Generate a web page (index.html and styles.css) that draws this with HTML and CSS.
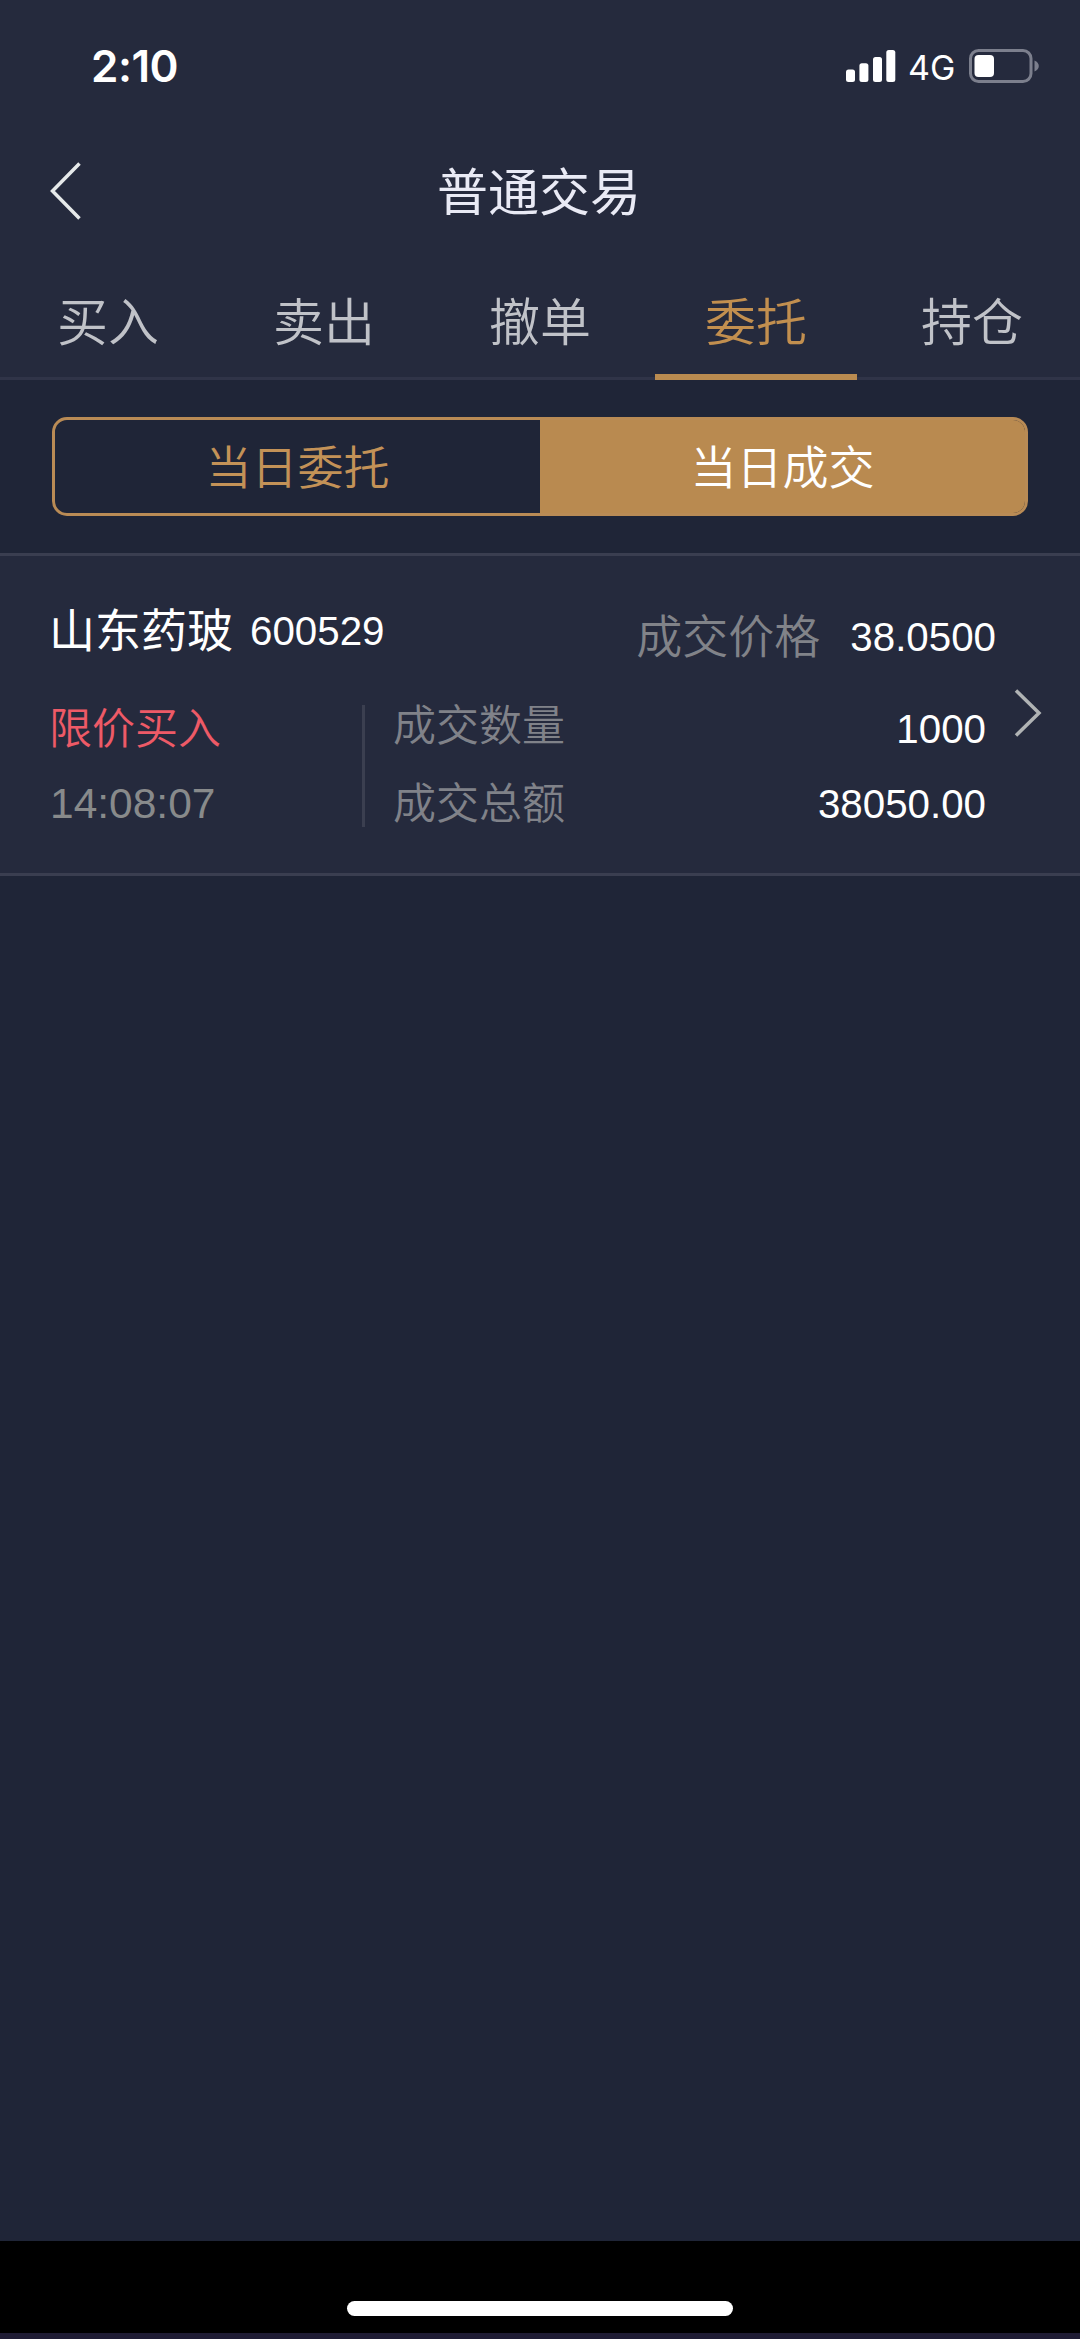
FILE: index.html
```html
<!DOCTYPE html>
<html lang="zh-CN">
<head>
<meta charset="utf-8">
<title>普通交易</title>
<link rel="stylesheet" href="styles.css">
</head>
<body>
<div class="screen">
  <header class="header">
    <div class="status">
      <span class="clock">2:10</span>
      <div class="status-right">
        <svg class="signal" viewBox="0 0 50 32" width="50" height="32">
          <rect x="0" y="19.5" width="9" height="12.5" rx="2.5"/>
          <rect x="13.4" y="13.2" width="9" height="18.8" rx="2.5"/>
          <rect x="27" y="7" width="9" height="25" rx="2.5"/>
          <rect x="40.3" y="0" width="9" height="32" rx="2.5"/>
        </svg>
        <span class="network">4G</span>
        <svg class="battery" viewBox="0 0 71 34" width="71" height="34">
          <rect class="shell" x="1.5" y="1.5" width="60.5" height="31" rx="8"/>
          <rect class="charge" x="5.5" y="6" width="19.5" height="22" rx="4"/>
          <path class="nub" d="M65.5 11.5c2.6 1 4.3 3.200 4.300 5.500s-1.700 4.500-4.300 5.500z"/>
        </svg>
      </div>
    </div>
    <div class="navbar">
      <svg class="back" viewBox="0 0 34 58" width="34" height="58"><path d="M30.500 1.500 3.500 29l27 27.500"/></svg>
      <h1 class="title">普通交易</h1>
    </div>
    <nav class="tabs">
      <a class="tab">买入</a>
      <a class="tab">卖出</a>
      <a class="tab">撤单</a>
      <a class="tab active">委托</a>
      <a class="tab">持仓</a>
    </nav>
  </header>
  <div class="filter">
    <div class="segmented">
      <span class="segment">当日委托</span>
      <span class="segment selected">当日成交</span>
    </div>
  </div>
  <main class="list">
    <article class="trade">
      <div class="trade-head">
        <span class="name">山东药玻</span>
        <span class="number code">600529</span>
        <span class="label-lg">成交价格</span>
        <span class="number price">38.0500</span>
      </div>
      <div class="trade-body">
        <div class="side">
          <span class="kind">限价买入</span>
          <span class="time">14:08:07</span>
        </div>
        <div class="details">
          <div class="row"><span class="label">成交数量</span><span class="number quantity">1000</span></div>
          <div class="row"><span class="label">成交总额</span><span class="number">38050.00</span></div>
        </div>
        <svg class="more" viewBox="0 0 28 48" width="28" height="48"><path d="M2 1.500 25 24 2 46.500"/></svg>
      </div>
    </article>
  </main>
  <footer class="home"><div class="home-bar"></div></footer>
</div>
</body>
</html>
```
FILE: styles.css
```css
* { box-sizing: border-box; }

body {
  margin: 0;
  background: #1f2537;
  font-family: "Liberation Sans", "Noto Sans CJK SC", sans-serif;
  font-weight: 350;
  color: #fff;
}

.screen {
  width: 1080px;
  height: 2339px;
  display: flex;
  flex-direction: column;
}

.header { background: #252a3d; height: 380px; }

.status {
  height: 136px;
  padding: 0 40px 0 91px;
  display: flex;
  justify-content: space-between;
}

.clock {
  margin-top: 38px;
  font: 600 44px/56px Inter, sans-serif;
  letter-spacing: -0.5px;
}

.status-right { display: flex; height: 34px; margin-top: 49px; }
.signal { fill: #fff; margin-top: 1px; }
.network { width: 73px; padding-left: 12px; font: 400 34px/38px Inter, sans-serif; }
.shell { fill: none; stroke: #7c7f8d; stroke-width: 3; }
.charge { fill: #fff; }
.nub { fill: #7c7f8d; }

.navbar {
  height: 112px;
  padding: 0 49px;
  display: grid;
  grid-template-columns: 34px 1fr 34px;
  align-items: center;
}

.back { margin-bottom: 3px; fill: none; stroke: #e6e9ea; stroke-width: 3.5; }

.title {
  margin: 3px 0 0 -2px;
  text-align: center;
  font-size: 51px;
  font-weight: 400;
  line-height: 72px;
  color: #e9eaf5;
}

.tabs {
  height: 132px;
  display: flex;
  border-bottom: 3px solid #303448;
}

.tab {
  flex: 1;
  height: 132px;
  display: flex;
  flex-direction: column;
  align-items: center;
  justify-content: space-between;
  padding-top: 40px;
  font-size: 51px;
  line-height: 72px;
  color: #c0c2c8;
}

.tab.active { color: #c28f4f; }
.tab.active::after { content: ""; width: 202px; height: 6px; background: #ba8b50; }

.filter {
  height: 176px;
  padding: 37px 52px 0;
  border-bottom: 3px solid #3a3e50;
}

.segmented {
  height: 99px;
  display: flex;
  border: 3px solid #b98b55;
  border-radius: 15px;
  overflow: hidden;
}

.segment {
  flex: 1;
  text-align: center;
  font-size: 46px;
  line-height: 96px;
  color: #c39257;
}

.segment.selected { background: #b98a50; color: #fff; }

.list { flex: 1; }

.trade {
  height: 320px;
  background: #252a3d;
  border-bottom: 3px solid #3a3e50;
}

.trade-head {
  display: flex;
  height: 149px;
  padding: 43px 84px 0 49px;
  line-height: 64px;
}

.name { font-size: 46px; font-weight: 400; }
.number { font-size: 40.300px; font-weight: 400; }
.code { margin: 1px 0 0 17px; }
.label-lg { margin: 6px 0 0 auto; font-size: 46px; color: #818389; }
.price { margin: 7px 0 0 30px; }

.trade-body { display: flex; }

.side {
  width: 315px;
  height: 122px;
  display: flex;
  flex-direction: column;
  gap: 12px;
  margin-left: 50px;
  padding-top: 2px;
  border-right: 3px solid #3b3f50;
}

.kind { margin-left: -1px; font-size: 43px; line-height: 45px; color: #ee5a67; }
.time { font-size: 42.500px; font-weight: 400; line-height: 80px; color: #888a8b; }

.details { width: 621px; padding: 1px 0 0 28px; }
.row { display: flex; justify-content: space-between; height: 78px; line-height: 40px; }
.label { font-size: 43px; color: #808289; }
.row .number { margin-top: 1px; }
.row .quantity { margin-top: 4px; }

.more { margin: -16px 0 0 28px; fill: none; stroke: #b0b3b4; stroke-width: 3.500; }

.home {
  height: 98px;
  background: #000;
  border-bottom: 6px solid #1f1c34;
  padding-top: 60px;
}

.home-bar { width: 386px; height: 15px; margin: 0 auto; border-radius: 8px; background: #fff; }
```
